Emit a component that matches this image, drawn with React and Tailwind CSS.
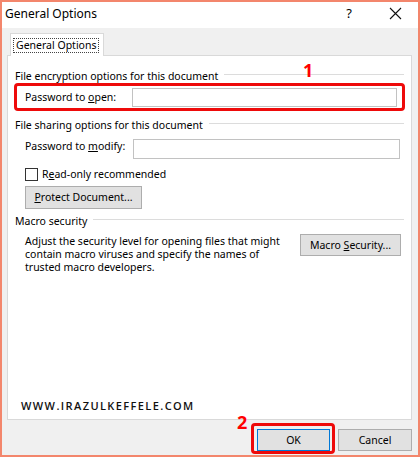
export default function App() {
  const font = "font-['Segoe_UI','Noto_Sans',sans-serif]";

  return (
    <div className={`w-[420px] h-[457px] border-2 border-[#f3866c] bg-[#f0f0f0] flex flex-col text-[10.5px] text-black ${font}`}>
      {/* Title bar */}
      <div className="h-[26px] bg-white flex items-center shrink-0">
        <span className="pl-[3px] text-[12px] leading-none -mt-[3px]">General Options</span>
        <span className="ml-auto text-[13px] leading-none -mt-[3px] mr-[37px]">?</span>
        <svg width="13" height="13" viewBox="0 0 13 13" className="mr-[16px] -mt-[3px]">
          <path d="M1 1 L12 12 M12 1 L1 12" stroke="#111" strokeWidth="1.1" />
        </svg>
      </div>

      {/* Body */}
      <div className="flex-1 flex flex-col pl-[5px] pr-[6px] pt-[5px]">
        {/* Tab */}
        <div className="relative z-10 ml-[3px] w-[94px] h-[23px] -mb-px bg-white border border-b-0 border-[#d9d9d9] flex items-start pt-[4px] pl-[2px]">
          <span className="border border-dotted border-[#444] px-[2px] h-[15px] flex items-center leading-none">General Options</span>
        </div>

        {/* Panel */}
        <div className="h-[365px] bg-white border border-[#d9d9d9] flex flex-col px-[6px]">
          {/* File encryption */}
          <div className="relative mt-[13px] h-[14px] flex items-center pl-[1px]">
            <span className="leading-none">File encryption options for this document</span>
            <div className="flex-1 h-px bg-[#dcdcdc] ml-[6px] mr-[1px] -mt-[3px]" />
            <span className="absolute left-[289px] -top-[8px] text-[18px] font-bold text-[#ff0000] leading-none">1</span>
          </div>
          <div className="h-[28px] border-[3px] border-[#ee0a0a] rounded-[4px] flex items-center pl-[8px] pr-[5px]">
            <span className="w-[108px] leading-none">Password to <span className="underline">o</span>pen:</span>
            <div className="w-[267px] h-[19px] border border-[#c2c2c2] bg-white" />
          </div>

          {/* File sharing */}
          <div className="mt-[7px] h-[14px] flex items-center pl-[1px]">
            <span className="leading-none">File sharing options for this document</span>
            <div className="flex-1 h-px bg-[#dcdcdc] ml-[6px] mr-[1px] -mt-[3px]" />
          </div>
          <div className="mt-[7px] h-[20px] flex items-center pl-[11px]">
            <span className="w-[108px] leading-none -mt-[6px]">Password to <span className="underline">m</span>odify:</span>
            <div className="w-[267px] h-[20px] border border-[#c2c2c2] bg-white" />
          </div>
          <div className="mt-[9px] h-[13px] flex items-center pl-[11px]">
            <div className="w-[13px] h-[13px] border border-[#333] bg-white" />
            <span className="ml-[4px] leading-none">R<span className="underline">e</span>ad-only recommended</span>
          </div>
          <div className="mt-[5px] pl-[11px]">
            <div className="w-[117px] h-[23px] bg-[#e1e1e1] border border-[#adadad] flex items-center justify-center leading-none">
              <span><span className="underline">P</span>rotect Document...</span>
            </div>
          </div>

          {/* Macro security */}
          <div className="mt-[5px] h-[14px] flex items-center pl-[1px]">
            <span className="leading-none">Macro security</span>
            <div className="flex-1 h-px bg-[#dcdcdc] ml-[6px] mr-[1px] -mt-[3px]" />
          </div>
          <div className="mt-[6px] flex items-start pl-[11px] pr-[4px]">
            <p className="leading-[13px] flex-1 mt-[1px]">
              Adjust the security level for opening files that might<br />
              contain macro viruses and specify the names of<br />
              trusted macro developers.
            </p>
            <div className="w-[101px] h-[22px] bg-[#e1e1e1] border border-[#adadad] flex items-center justify-center leading-none">
              <span>Macro <span className="underline">S</span>ecurity...</span>
            </div>
          </div>

          {/* Watermark */}
          <div className="mt-auto mb-[8px] pl-[7px] font-['Open_Sans',sans-serif] font-semibold text-[11px] tracking-[1.4px] text-[#111] leading-none">
            WWW.IRAZULKEFFELE.COM
          </div>
        </div>

        {/* Buttons */}
        <div className="mt-[9px] flex justify-end gap-[8px]">
          <div className="relative">
            <div className="w-[73px] h-[22px] bg-[#e1e1e1] border border-[#0078d7] flex items-center justify-center leading-none">OK</div>
            <div className="absolute -left-[6px] -top-[6px] -right-[5px] -bottom-[3px] border-[3px] border-[#ee0a0a] rounded-[4px]" />
            <span className="absolute -left-[20px] -top-[16px] text-[18px] font-bold text-[#ff0000] leading-none">2</span>
          </div>
          <div className="w-[74px] h-[22px] bg-[#e1e1e1] border border-[#adadad] flex items-center justify-center leading-none">Cancel</div>
        </div>
      </div>
    </div>
  );
}
